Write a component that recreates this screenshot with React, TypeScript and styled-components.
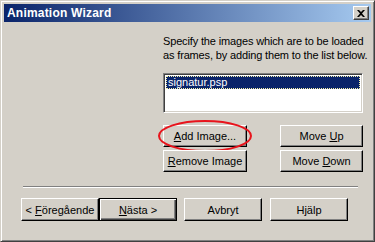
import React from 'react';
import styled, { createGlobalStyle } from 'styled-components';

const GlobalStyle = createGlobalStyle`
  html, body {
    margin: 0;
    padding: 0;
    background: #ffffff;
  }
  body {
    font-family: 'Liberation Sans', Arial, sans-serif;
    font-size: 11px;
    color: #000;
  }
`;

const Window = styled.div`
  box-sizing: border-box;
  width: 375px;
  height: 242px;
  background: #d4d0c8;
  border-top: 1px solid #d4d0c8;
  border-left: 1px solid #d4d0c8;
  border-right: 1px solid #404040;
  border-bottom: 1px solid #404040;
  box-shadow: inset 1px 1px 0 #ffffff, inset -1px -1px 0 #808080;
  padding: 3px;
  display: flex;
  flex-direction: column;
`;

const TitleBar = styled.div`
  height: 18px;
  flex-shrink: 0;
  background: linear-gradient(to right, #0a246a, #a6caf0);
  display: flex;
  align-items: center;
  justify-content: space-between;
  padding: 0 2px 0 3px;
`;

const Title = styled.span`
  color: #fff;
  font-weight: bold;
  font-size: 12px;
  letter-spacing: 0.2px;
`;

const CloseButton = styled.div`
  box-sizing: border-box;
  width: 16px;
  height: 14px;
  background: #d4d0c8;
  border-top: 1px solid #ffffff;
  border-left: 1px solid #ffffff;
  border-right: 1px solid #404040;
  border-bottom: 1px solid #404040;
  box-shadow: inset -1px -1px 0 #808080;
  display: flex;
  align-items: center;
  justify-content: center;
`;

const Body = styled.div`
  flex: 1;
  display: flex;
  flex-direction: column;
  padding: 12px 8px 0 15px;
`;

const Top = styled.div`
  display: flex;
  justify-content: flex-end;
`;

const Side = styled.div`
  width: 200px;
  display: flex;
  flex-direction: column;
`;

const Intro = styled.p`
  margin: 0;
  line-height: 14px;
  white-space: nowrap;
  letter-spacing: -0.15px;
`;

const ListBox = styled.div`
  box-sizing: border-box;
  margin-top: 11px;
  height: 40px;
  background: #fff;
  border-top: 1px solid #808080;
  border-left: 1px solid #808080;
  border-right: 1px solid #ffffff;
  border-bottom: 1px solid #ffffff;
  box-shadow: inset 1px 1px 0 #404040, inset -1px -1px 0 #d4d0c8;
  padding: 2px;
`;

const ListItem = styled.div<{ selected?: boolean }>`
  box-sizing: border-box;
  height: 13px;
  line-height: 11px;
  padding: 0 1px;
  color: ${p => (p.selected ? '#fff' : '#000')};
  background: ${p => (p.selected ? '#0a246a' : 'transparent')};
  border: 1px dotted ${p => (p.selected ? '#f4f0a8' : 'transparent')};
`;

const ButtonGrid = styled.div`
  margin-top: 12px;
  display: grid;
  grid-template-columns: 84px 83px;
  justify-content: space-between;
  row-gap: 3px;
`;

const Button = styled.div<{ isDefault?: boolean; w?: number }>`
  box-sizing: border-box;
  position: relative;
  width: ${p => (p.w ? `${p.w}px` : 'auto')};
  height: ${p => (p.w ? '23px' : '22px')};
  background: #d4d0c8;
  display: flex;
  align-items: center;
  justify-content: center;
  border-top: 1px solid ${p => (p.isDefault ? '#000' : '#ffffff')};
  border-left: 1px solid ${p => (p.isDefault ? '#000' : '#ffffff')};
  border-right: 1px solid #000;
  border-bottom: 1px solid #000;
  box-shadow: ${p =>
    p.isDefault
      ? 'inset 1px 1px 0 #ffffff, inset -1px -1px 0 #404040, inset -2px -2px 0 #808080'
      : 'inset -1px -1px 0 #808080'};
  white-space: nowrap;
`;

const Key = styled.span`
  text-decoration: underline;
  text-underline-offset: 1px;
`;

const Circled = styled.div`
  position: relative;
`;

const Ring = styled.svg`
  position: absolute;
  left: -6px;
  top: -6px;
  pointer-events: none;
  overflow: visible;
`;

const Separator = styled.div`
  margin: 14px 5px 0 4px;
  height: 0;
  border-top: 1px solid #808080;
  border-bottom: 1px solid #ffffff;
`;

const Footer = styled.div`
  margin-top: 10px;
  display: flex;
  padding-left: 2px;
`;

const Gap = styled.div<{ w: number }>`
  width: ${p => p.w}px;
`;

export default function App() {
  return (
    <>
      <GlobalStyle />
      <Window>
        <TitleBar>
          <Title>Animation Wizard</Title>
          <CloseButton>
            <svg width="8" height="7" viewBox="0 0 8 7">
              <path d="M0 0h2l2 2 2-2h2L5 3.5 8 7H6L4 5 2 7H0l3-3.5z" fill="#000" />
            </svg>
          </CloseButton>
        </TitleBar>
        <Body>
          <Top>
            <Side>
              <Intro>
                Specify the images which are to be loaded
                <br />
                as frames, by adding them to the list below.
              </Intro>
              <ListBox>
                <ListItem selected>signatur.psp</ListItem>
              </ListBox>
              <ButtonGrid>
                <Circled>
                  <Button>
                    <span><Key>A</Key>dd Image...</span>
                  </Button>
                  <Ring width="96" height="34">
                    <ellipse cx="48" cy="17" rx="46" ry="15" fill="none" stroke="#e8141c" strokeWidth="2" />
                  </Ring>
                </Circled>
                <Button>
                  <span>Move <Key>U</Key>p</span>
                </Button>
                <Button>
                  <span><Key>R</Key>emove Image</span>
                </Button>
                <Button>
                  <span>Move <Key>D</Key>own</span>
                </Button>
              </ButtonGrid>
            </Side>
          </Top>
          <Separator />
          <Footer>
            <Button w={78}>
              <span>&lt; <Key>F</Key>öregående</span>
            </Button>
            <Button w={78} isDefault>
              <span><Key>N</Key>ästa &gt;</span>
            </Button>
            <Gap w={7} />
            <Button w={78}>
              <span>Avbryt</span>
            </Button>
            <Gap w={8} />
            <Button w={78}>
              <span>Hjälp</span>
            </Button>
          </Footer>
        </Body>
      </Window>
    </>
  );
}
